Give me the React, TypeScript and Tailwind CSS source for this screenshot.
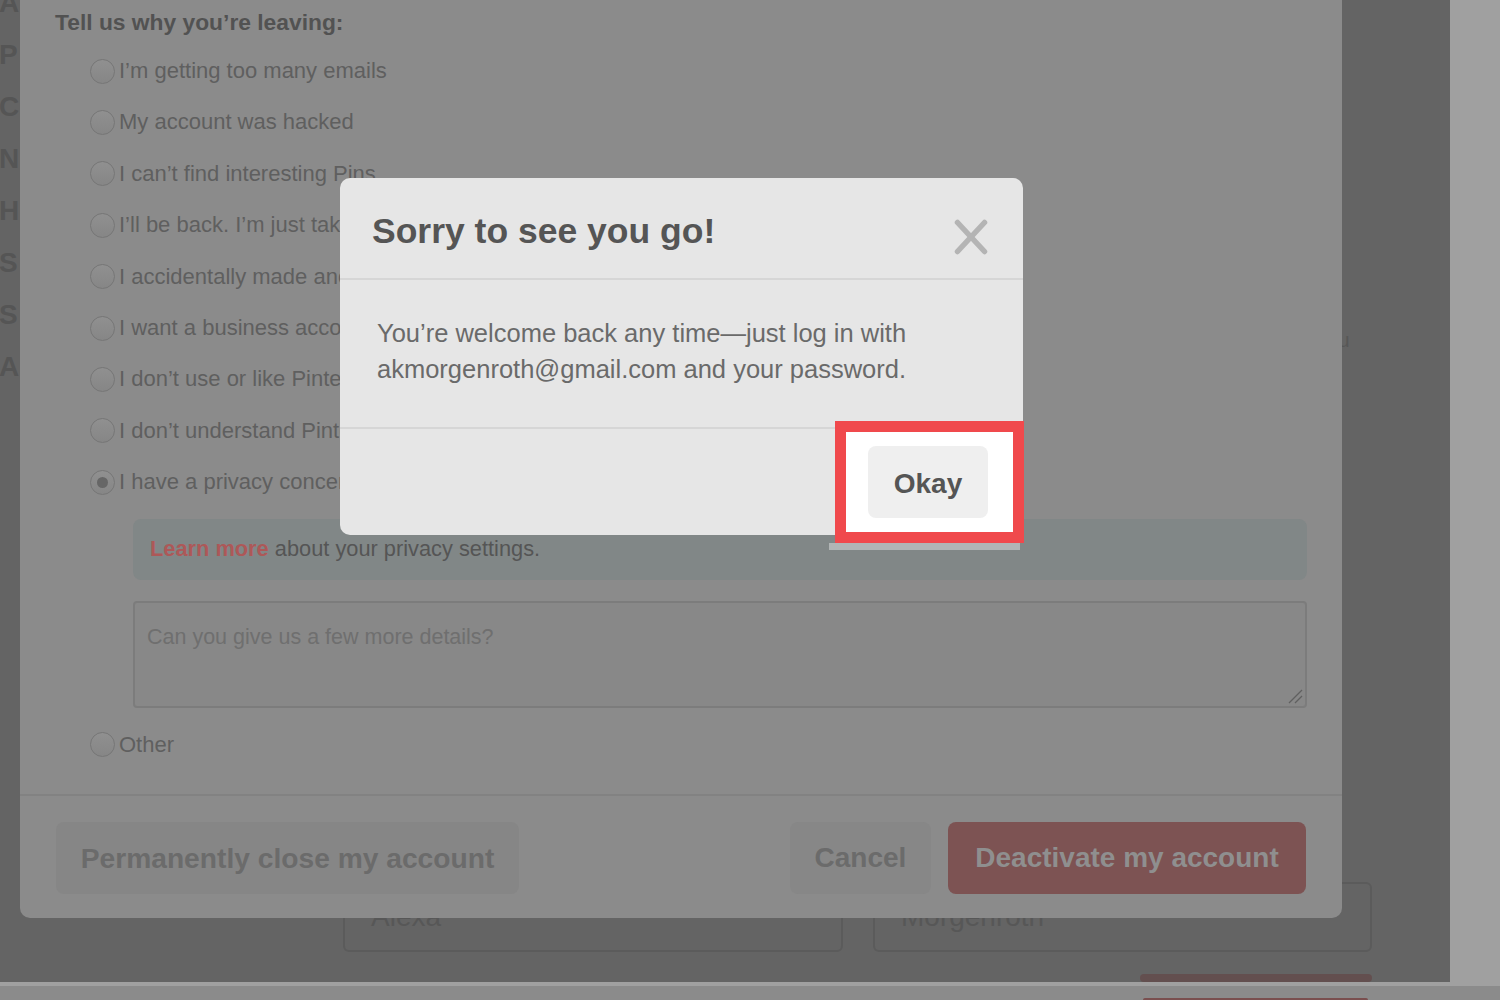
import React from 'react';

const reasons = [
  'I’m getting too many emails',
  'My account was hacked',
  'I can’t find interesting Pins',
  'I’ll be back. I’m just taking a break',
  'I accidentally made another account',
  'I want a business account',
  'I don’t use or like Pinterest',
  'I don’t understand Pinterest',
  'I have a privacy concern',
];

const letters = ['A', 'P', 'C', 'N', 'H', 'S', 'S', 'A'];

const Radio: React.FC<{ checked?: boolean; label: string }> = ({ checked, label }) => (
  <div className="flex h-[51.4px] items-center pl-[70px]">
    <div className="flex h-[25px] w-[25px] shrink-0 items-center justify-center rounded-full border border-[#767676] bg-gradient-to-b from-[#909090] to-[#868686]">
      {checked && <div className="h-[11px] w-[11px] rounded-full bg-[#666666]" />}
    </div>
    <span className="ml-[4px] whitespace-nowrap text-[22px] leading-none text-[#5f5f5f]">{label}</span>
  </div>
);

const App: React.FC = () => {
  return (
    <div
      className="relative h-[1000px] w-[1500px] overflow-hidden bg-[#646464]"
      style={{ fontFamily: '"Liberation Sans", Arial, sans-serif' }}
    >
      {/* page underneath the overlay */}
      <div className="flex h-[982px] overflow-hidden">
        <div className="flex w-[1450px]">
          <div className="-ml-[1px] -mt-[23px] flex w-[21px] flex-col text-[28px] font-bold leading-[52px] text-[#555555]">
            {letters.map((l, i) => (
              <span key={i}>{l}</span>
            ))}
          </div>
          <div className="flex flex-1 flex-col">
            <div className="ml-[1318px] mt-[329px] text-[21px] leading-[22px] text-[#575757]">u</div>
            <div className="ml-[323px] mt-[531px] flex gap-[30px]">
              <div className="flex h-[70px] w-[500px] items-center rounded-[6px] border-2 border-[#5b5b5b] pl-[26px] text-[28px] text-[#575757]">
                Alexa
              </div>
              <div className="flex h-[70px] w-[499px] items-center rounded-[6px] border-2 border-[#5b5b5b] pl-[26px] text-[28px] text-[#575757]">
                Morgenroth
              </div>
            </div>
            <div className="ml-[1120px] mt-[22px] h-[40px] w-[232px] rounded-[8px] bg-[#634f4f]" />
          </div>
        </div>
        <div className="w-[50px] bg-[#a0a0a0]" />
      </div>
      <div className="h-[4px] bg-[#a0a0a0]" />
      <div className="flex h-[14px] flex-col justify-end bg-[#8b8b8b]">
        <div className="ml-[1143px] h-[2px] w-[225px] rounded-t-[2px] bg-[#7a4f4f]" />
      </div>

      {/* deactivate dialog */}
      <div className="absolute left-[20px] top-0 flex h-[918px] w-[1322px] flex-col rounded-b-[10px] bg-[#8b8b8b]">
        <div className="pl-[35px] pt-[8px] text-[22.8px] font-bold leading-[28px] text-[#525252]">
          Tell us why you’re leaving:
        </div>
        <div className="mt-[9.4px] flex flex-col">
          {reasons.map((r, i) => (
            <Radio key={r} label={r} checked={i === 8} />
          ))}
        </div>
        <div className="ml-[113px] mt-[11px] flex h-[61px] w-[1174px] items-center rounded-[8px] bg-[#818787] pl-[17px] text-[21.8px] text-[#555555]">
          <span className="font-bold text-[#ad5858]">Learn more</span>
          <span>&nbsp;about your privacy settings.</span>
        </div>
        <div className="relative ml-[113px] mt-[21px] h-[107px] w-[1174px] rounded-[4px] border-2 border-[#7c7c7c] bg-[#888888] pl-[12px] pt-[18px] text-[21.5px] text-[#6f6f6f]">
          Can you give us a few more details?
          <svg className="absolute bottom-[2px] right-[2px]" width="16" height="16" viewBox="0 0 16 16">
            <line x1="2" y1="15" x2="15" y2="2" stroke="#606060" strokeWidth="1.3" />
            <line x1="8" y1="15" x2="15" y2="8" stroke="#606060" strokeWidth="1.3" />
          </svg>
        </div>
        <div className="mt-[11px]">
          <Radio label="Other" />
        </div>
        <div className="mt-[24px] h-[2px] bg-[#828282]" />
        <div className="flex flex-1 items-start justify-between px-[36px] pt-[26px]">
          <button className="flex h-[72px] w-[463px] items-center justify-center rounded-[8px] bg-[#868686] text-[28.2px] font-bold text-[#6b6b6b]">
            Permanently close my account
          </button>
          <div className="flex gap-[17px]">
            <button className="flex h-[72px] w-[141px] items-center justify-center rounded-[8px] bg-[#878787] text-[28px] font-bold text-[#6b6b6b]">
              Cancel
            </button>
            <button className="flex h-[72px] w-[358px] items-center justify-center rounded-[8px] bg-[#7d5353] text-[28px] font-bold text-[#8f8f8f]">
              Deactivate my account
            </button>
          </div>
        </div>
      </div>

      {/* confirmation modal */}
      <div className="absolute left-[340px] top-[178px] flex h-[357px] w-[683px] flex-col rounded-[10px] bg-[#e6e6e6]">
        <div className="flex h-[100px] items-start justify-between pl-[32px] pr-[35px]">
          <h2 className="mt-[33px] text-[35.5px] font-bold leading-[40px] text-[#555555]">Sorry to see you go!</h2>
          <svg className="mt-[41px]" width="34" height="36" viewBox="0 0 34 36">
            <line x1="3.5" y1="3.5" x2="30.5" y2="32.5" stroke="#b4b4b4" strokeWidth="5.5" strokeLinecap="round" />
            <line x1="30.5" y1="3.5" x2="3.5" y2="32.5" stroke="#b4b4b4" strokeWidth="5.5" strokeLinecap="round" />
          </svg>
        </div>
        <div className="h-[2px] bg-[#d6d6d6]" />
        <div className="h-[147px] pl-[37px] pt-[35px] text-[25.5px] leading-[36px] text-[#6a6a6a]">
          <p>You’re welcome back any time—just log in with</p>
          <p>akmorgenroth@gmail.com and your password.</p>
        </div>
        <div className="h-[2px] bg-[#d6d6d6]" />
      </div>

      {/* highlight around the Okay button */}
      <div className="absolute left-[829px] top-[543px] h-[7px] w-[191px] bg-[#b1b5b5]" />
      <div className="absolute left-[835px] top-[421px] h-[122px] w-[189px] border-[11px] border-[#f0494c] bg-white pl-[22px] pt-[14px]">
        <button className="flex h-[72px] w-[120px] items-center justify-center rounded-[8px] bg-[#efefef] pt-[3px] text-[28px] font-bold text-[#555555]">
          Okay
        </button>
      </div>
    </div>
  );
};

export default App;
